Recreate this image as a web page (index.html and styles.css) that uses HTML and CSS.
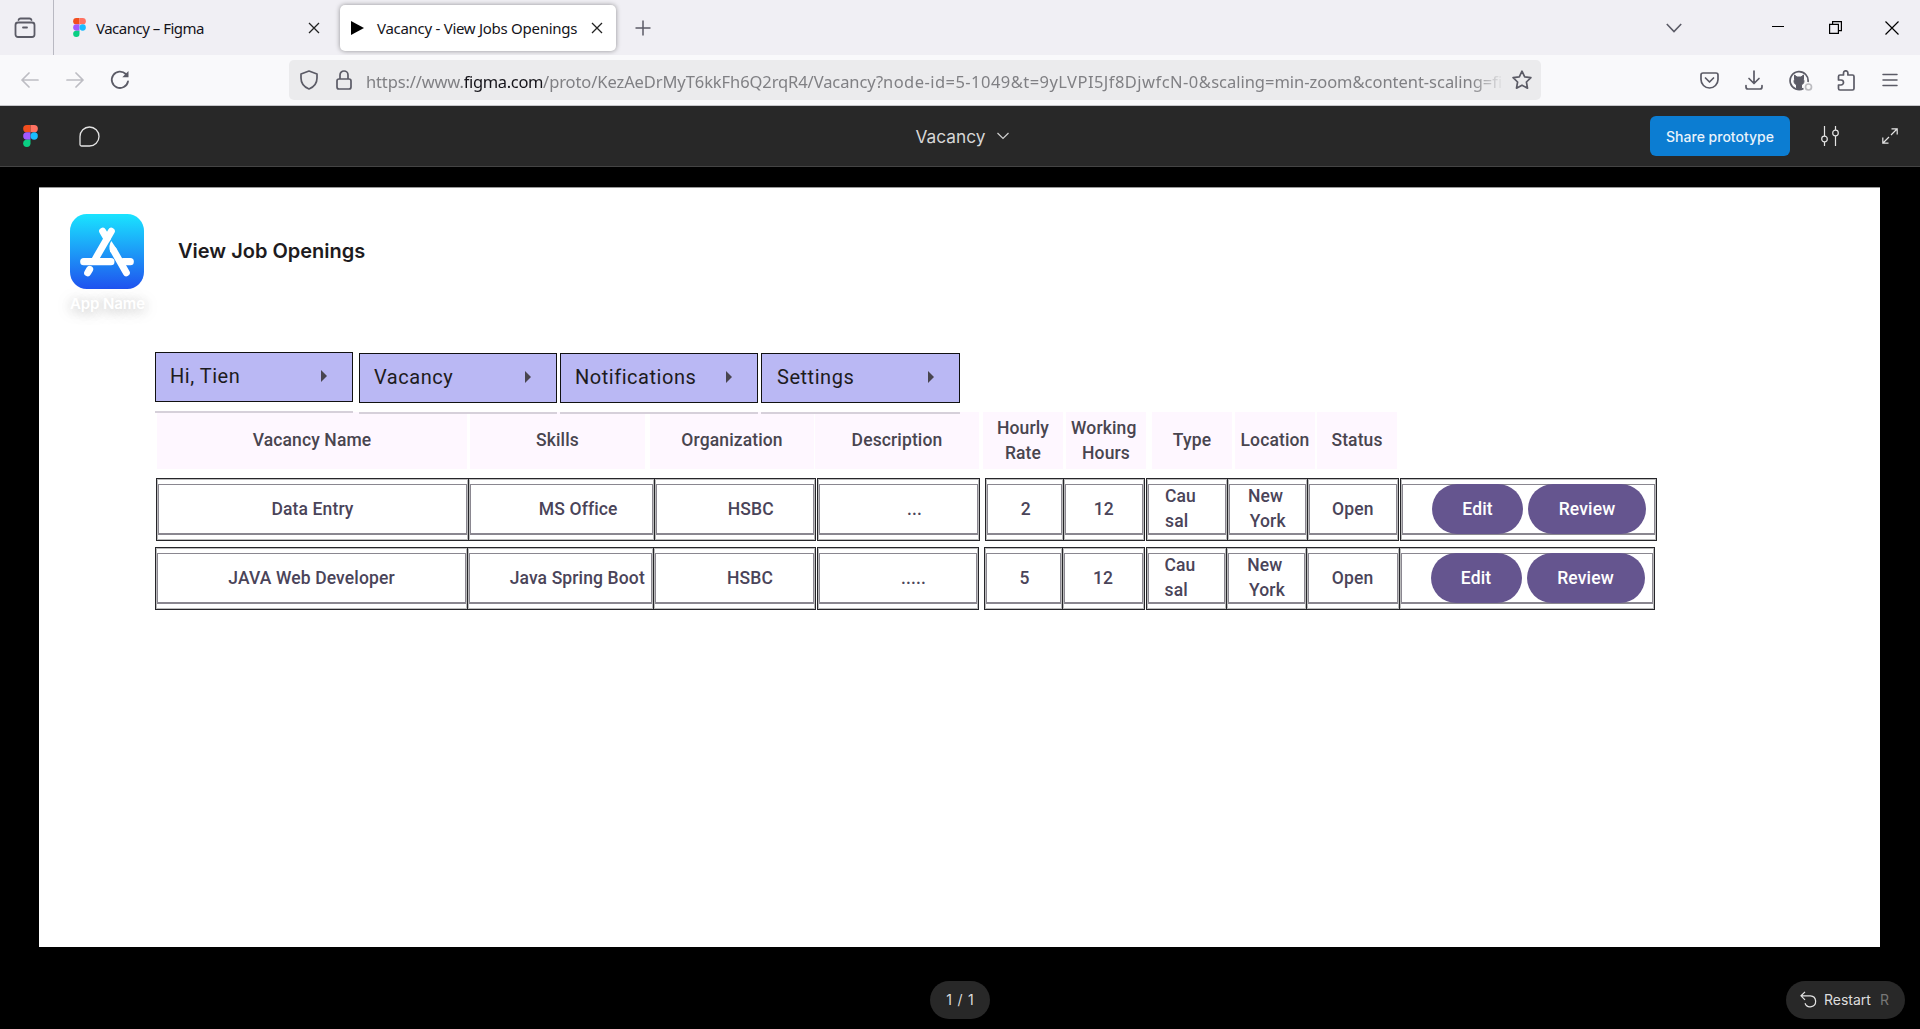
FILE: index.html
```html
<!DOCTYPE html>
<html lang="en">
<head>
<meta charset="utf-8">
<title>Vacancy - View Jobs Openings</title>
<link rel="stylesheet" href="styles.css">
</head>
<body>
<svg width="0" height="0" class="defs" aria-hidden="true">
  <symbol id="figma" viewBox="0 0 16 24">
    <path d="M4 0h4v8H4a4 4 0 0 1 0-8z" fill="#f24e1e"/>
    <path d="M8 0h4a4 4 0 0 1 0 8H8z" fill="#ff7262"/>
    <path d="M4 8h4v8H4a4 4 0 0 1 0-8z" fill="#a259ff"/>
    <circle cx="12" cy="12" r="4" fill="#1abcfe"/>
    <path d="M4 16h4v4a4 4 0 1 1-4-4z" fill="#0acf83"/>
  </symbol>
</svg>

<header class="tabs">
  <div class="tabs-view"><svg width="22" height="22" viewBox="0 0 22 22" fill="none" stroke="#5b5b66" stroke-width="1.800" stroke-linecap="round"><path d="M4.500 3Q5 1.500 6.500 1.500h9q1.500 0 2 1.500"/><rect x="1.500" y="5.500" width="19" height="14.500" rx="2.500"/><path d="M9 10.500h4"/></svg></div>
  <div class="tab">
    <svg class="fav" width="13" height="19"><use href="#figma"/></svg>
    <span class="tab-name name-a">Vacancy – Figma</span>
    <svg class="close" width="12" height="12" viewBox="0 0 12 12" stroke="#222" stroke-width="1.300"><path d="M1 1l10 10M11 1L1 11"/></svg>
  </div>
  <div class="tab active">
    <svg class="fav" width="13" height="14" viewBox="0 0 13 14"><path d="M0 0l13 7-13 7z"/></svg>
    <span class="tab-name name-b">Vacancy - View Jobs Openings</span>
    <svg class="close" width="12" height="12" viewBox="0 0 12 12" stroke="#222" stroke-width="1.300"><path d="M1 1l10 10M11 1L1 11"/></svg>
  </div>
  <svg class="plus" width="16" height="16" viewBox="0 0 16 16" stroke="#5b5b66" stroke-width="1.500"><path d="M8 .5v15M.5 8h15"/></svg>
  <div class="window">
    <svg width="16" height="10" viewBox="0 0 16 10" fill="none" stroke="#5b5b66" stroke-width="1.600"><path d="M.8 1L8 8.500 15.200 1"/></svg>
    <svg width="12" height="12" viewBox="0 0 12 12" stroke="#000"><path d="M0 4.500h12"/></svg>
    <svg width="13" height="13" viewBox="0 0 13 13" fill="none" stroke="#000" stroke-width="1.200"><path d="M.6 3.400h8.800v9H.6zM3.600 3.400V.6h8.800v9H9.400"/></svg>
    <svg width="14" height="14" viewBox="0 0 14 14" stroke="#000" stroke-width="1.200"><path d="M.5.5l13 13M13.500.5l-13 13"/></svg>
  </div>
</header>

<nav class="toolbar">
  <svg width="18" height="16" viewBox="0 0 18 16" fill="none" stroke="#bdbdc3" stroke-width="1.700" stroke-linecap="round" stroke-linejoin="round"><path d="M17 8H1M8 1L1 8l7 7"/></svg>
  <svg width="18" height="16" viewBox="0 0 18 16" fill="none" stroke="#bdbdc3" stroke-width="1.700" stroke-linecap="round" stroke-linejoin="round"><path d="M1 8h16M10 1l7 7-7 7"/></svg>
  <svg width="20" height="20" viewBox="0 0 20 20" fill="none" stroke="#5b5b66" stroke-width="1.800" stroke-linecap="round"><path d="M18 11.500A8.200 8.200 0 1 1 15.800 4"/><path d="M18.500 1v6.200h-6.200z" fill="#5b5b66" stroke="none"/></svg>
  <div class="url">
    <svg width="18" height="20" viewBox="0 0 18 20" fill="none" stroke="#5b5b66" stroke-width="1.700" stroke-linejoin="round"><path d="M9 1l8 3v4c0 5-3 9-8 11C4 17 1 13 1 8V4z"/></svg>
    <svg width="16" height="20" viewBox="0 0 16 20" fill="none" stroke="#5b5b66" stroke-width="1.700"><rect x="1" y="9" width="14" height="10" rx="2"/><path d="M4 9V5a4 4 0 0 1 8 0v4"/></svg>
    <span class="address"><span class="scheme">https://www.</span><b>figma.com</b><span class="path">/proto/KezAeDrMyT6kkFh6Q2rqR4/Vacancy?</span><span class="node">node-id=5-1049&amp;t=9yLVPI5Jf8DjwfcN-0&amp;</span><span class="scaling">scaling=min-zoom&amp;content-scaling=fi</span></span>
    <svg class="star" width="20" height="20" viewBox="0 0 20 20" fill="none" stroke="#5b5b66" stroke-width="1.700" stroke-linejoin="round"><path d="M10 1.200l2.700 5.700 6.200.8-4.500 4.300 1.100 6.200L10 15.200l-5.500 3 1.100-6.200L1.100 7.700l6.200-.8z"/></svg>
  </div>
  <div class="tools">
    <svg width="19" height="17" viewBox="0 0 19 17" fill="none" stroke="#5b5b66" stroke-width="1.700" stroke-linecap="round" stroke-linejoin="round"><path d="M3 1h13q2 0 2 2v4.500a8.500 8.500 0 0 1-17 0V3q0-2 2-2zM5.500 6l4 4 4-4"/></svg>
    <svg width="18" height="20" viewBox="0 0 18 20" fill="none" stroke="#5b5b66" stroke-width="1.700" stroke-linecap="round" stroke-linejoin="round"><path d="M9 1v12M4 8.500L9 13.500l5-5M1 15.500v1.500q0 2 2 2h12q2 0 2-2v-1.500"/></svg>
    <svg class="extension" width="24" height="21" viewBox="0 0 24 21" fill="none" stroke="#5b5b66" stroke-width="1.700"><path d="M14.500 18.500A9 9 0 1 1 19 12"/><path d="M5.500 5l2.500 2h4l2.500-2v4.500c1.500 3-1 5-2 5.500v3.500h-5V15c-1-.5-3.500-2.500-2-5.500z" fill="#5b5b66" stroke-width="1"/><circle cx="19.500" cy="17" r="3" stroke="#bcbcc0" fill="#f9f9fb"/></svg>
    <svg class="puzzle" width="18" height="21" viewBox="0 0 18 21" fill="none" stroke="#5b5b66" stroke-width="1.700" stroke-linejoin="round"><path d="M1.500 9V6.500q0-1.500 1.500-1.500h3.500V3a2.200 2.200 0 0 1 4.400 0v2H15.500q1.500 0 1.500 1.500V18.500q0 1.500-1.500 1.500H3q-1.500 0-1.500-1.500V15H4a2.500 2.500 0 0 0 0-5H1.500z"/></svg>
    <svg width="16" height="14" viewBox="0 0 16 14" stroke="#5b5b66" stroke-width="1.500" stroke-linecap="round"><path d="M1 1.500h14M1 7h14M1 12.500h14"/></svg>
  </div>
</nav>

<section class="proto-bar">
  <div class="marks">
    <svg class="figma-mark" width="15" height="22"><use href="#figma"/></svg>
    <svg class="bubble" width="22" height="21" viewBox="0 0 22 21" fill="none" stroke="#e4e4e4" stroke-width="1.300"><path d="M1 10.500V18.500q0 1.500 1.500 1.500H10.500A9.500 9.500 0 1 0 1 10.500z"/></svg>
  </div>
  <div class="file">Vacancy <svg width="12" height="8" viewBox="0 0 12 8" fill="none" stroke="#d0d0d0" stroke-width="1.200"><path d="M.5 1L6 6.500 11.500 1"/></svg></div>
  <div class="actions">
    <button class="share">Share prototype</button>
    <svg width="20" height="20" viewBox="0 0 20 20" fill="none" stroke="#e4e4e4" stroke-width="1.200"><path d="M4.500 0v10M4.500 16v4M15.500 0v4M15.500 10v10"/><circle cx="4.500" cy="13" r="2.800"/><circle cx="15.500" cy="7" r="2.800"/></svg>
    <svg width="16" height="16" viewBox="0 0 16 16" fill="none" stroke="#e4e4e4" stroke-width="1.200"><path d="M9.500.8h5.700v5.700M15 1L9 7M.8 9.500v5.700h5.700M1 15l6-6"/></svg>
  </div>
</section>

<main class="stage">
  <div class="canvas">
    <div class="brand">
      <div class="app">
        <svg width="74" height="75" viewBox="0 0 222 222" preserveAspectRatio="none">
          <defs><linearGradient id="sky" x1="0" y1="0" x2="0" y2="1"><stop offset="0" stop-color="#1ae4ff"/><stop offset="1" stop-color="#1f52ef"/></linearGradient></defs>
          <rect width="222" height="222" rx="50" fill="url(#sky)"/>
          <g stroke="#fff" stroke-width="21" stroke-linecap="round" fill="none">
            <path d="M124 51L76 133"/><path d="M98 51l13 22"/>
            <path d="M41 141h82"/><path d="M160 141h21"/>
            <path d="M59 164l-6 10"/><path d="M131 108l38 66"/>
          </g>
          <path d="M124 80q-10 14-3 33l20-8z" fill="#fff"/>
        </svg>
        <span class="app-name">App Name</span>
      </div>
      <h1>View Job Openings</h1>
    </div>

    <div class="menu">
      <div class="menu-item first"><div class="menu-box"><span>Hi, Tien</span><i></i></div></div>
      <div class="menu-item second"><div class="menu-box"><span>Vacancy</span><i></i></div></div>
      <div class="menu-item third"><div class="menu-box"><span>Notifications</span><i></i></div></div>
      <div class="menu-item fourth"><div class="menu-box"><span>Settings</span><i></i></div></div>
    </div>

    <div class="head">
      <div>Vacancy Name</div><div>Skills</div><div>Organization</div><div>Description</div><div>Hourly<br>Rate</div><div><span>Working&nbsp;<br>Hours</span></div><div>Type</div><div>Location</div><div>Status</div>
    </div>

    <div class="row row-a">
      <div class="cell"><p>Data Entry</p></div>
      <div class="cell inset"><p>MS Office</p></div>
      <div class="cell inset"><p>HSBC</p></div>
      <div class="cell inset"><p>...</p></div>
      <div class="cell"><p>2</p></div>
      <div class="cell"><p>12</p></div>
      <div class="cell left"><p>Cau<br>sal</p></div>
      <div class="cell"><p>New<br>&nbsp;York</p></div>
      <div class="cell"><p>Open</p></div>
      <div class="cell buttons"><button class="edit">Edit</button><button class="review">Review</button></div>
    </div>
    <div class="row row-b">
      <div class="cell"><p>JAVA Web Developer</p></div>
      <div class="cell inset"><p>Java Spring Boot</p></div>
      <div class="cell inset"><p>HSBC</p></div>
      <div class="cell inset"><p>.....</p></div>
      <div class="cell"><p>5</p></div>
      <div class="cell"><p>12</p></div>
      <div class="cell left"><p>Cau<br>sal</p></div>
      <div class="cell"><p>New<br>&nbsp;York</p></div>
      <div class="cell"><p>Open</p></div>
      <div class="cell buttons"><button class="edit">Edit</button><button class="review">Review</button></div>
    </div>
  </div>
  <footer class="bottom">
    <div class="pager">1 / 1</div>
    <div class="restart"><svg width="18" height="17" viewBox="0 0 18 17" fill="none" stroke="#e4e4e4" stroke-width="1.200"><path d="M5 .8L1 4.800l4 4M1 4.800h9.500a5.500 5.500 0 1 1-5.500 7.500"/></svg><span>Restart</span><kbd>R</kbd></div>
  </footer>
</main>
</body>
</html>
```
FILE: styles.css
```css
* { box-sizing: border-box; }
body { margin: 0; width: 1920px; height: 1029px; overflow: hidden; display: flex; flex-direction: column; background: #000; font-family: Inter, sans-serif; }
svg { display: block; flex: none; }
.defs { position: absolute; }
button { border: 0; font-family: inherit; padding: 0; }

/* browser tabs */
.tabs { height: 55px; background: #f0eff4; display: flex; align-items: center; font-family: "Noto Sans", sans-serif; font-size: 15px; color: #15141a; flex: none; }
.tabs-view { width: 54px; height: 55px; border-right: 1px solid #b9b9c2; padding: 17px 0 0 14px; }
.tab { width: 286px; height: 46px; display: flex; align-items: center; padding: 0 20px 0 19px; white-space: nowrap; }
.tab-name { margin-left: 10px; letter-spacing: -0.5px; }
.name-b { letter-spacing: -0.28px; }
.close { margin-left: auto; }
.tab.active { width: 276px; background: #fff; border-radius: 5px; box-shadow: 0 0 5px rgba(0,0,0,.4); padding: 0 13px 0 11px; }
.active .tab-name { margin-left: 13px; }
.plus { margin-left: 19px; }
.window { margin-left: auto; display: flex; align-items: center; padding-right: 21px; }
.window svg:nth-child(2) { margin-left: 90px; }
.window svg:nth-child(3) { margin-left: 45px; }
.window svg:nth-child(4) { margin-left: 43px; }

/* address bar */
.toolbar { height: 51px; background: #f9f9fb; border-bottom: 1px solid #c6c6ca; display: flex; align-items: center; padding-left: 21px; flex: none; }
.toolbar > svg:nth-child(2) { margin-left: 27px; }
.toolbar > svg:nth-child(3) { margin-left: 26px; }
.url { margin-left: 159px; width: 1252px; height: 40px; background: #ebebed; border-radius: 5px; display: flex; align-items: center; padding: 0 9px 0 11px; }
.url svg + svg { margin-left: 18px; }
.address { margin-left: 14px; padding-top: 2px; width: 1138px; white-space: nowrap; font: 16.500px "Noto Sans", sans-serif; letter-spacing: -0.350px; color: #808084; -webkit-mask-image: linear-gradient(to right, #000 1105px, transparent 1138px); mask-image: linear-gradient(to right, #000 1105px, transparent 1138px); }
.address b { font-weight: 400; color: #15141a; }
.scheme { letter-spacing: -0.150px; }
.path { letter-spacing: -0.090px; }
.node { letter-spacing: 0.460px; }
.scaling { letter-spacing: -0.030px; }
.star { margin-left: auto; }
.tools { margin-left: auto; display: flex; align-items: center; gap: 26px; padding-right: 22px; }
.extension { margin: 0 -2px 0 0; }
.puzzle { margin-right: 1px; }

/* prototype header */
.proto-bar { height: 61px; background: #282828; border-bottom: 1px solid #444; display: grid; grid-template-columns: 1fr auto 1fr; align-items: center; padding: 0 22px 0 23px; flex: none; }
.marks { display: flex; align-items: center; gap: 41px; }
.file { color: #d6d6d6; font-size: 17.300px; display: flex; align-items: center; gap: 12px; padding-left: 4px; }
.actions { display: flex; align-items: center; justify-content: flex-end; }
.share { width: 140px; height: 40px; border-radius: 6px; background: #0c7dd2; color: #e8f2fb; font-size: 14px; font-weight: 500; }
.actions svg:nth-child(2) { margin-left: 30px; }
.actions svg:nth-child(3) { margin-left: 42px; }

/* prototype canvas */
.stage { flex: 1; display: flex; flex-direction: column; padding: 20px 40px 0 39px; }
.canvas { height: 760px; background: #fff; border-top: 1px solid #999; padding-left: 31px; font-family: Roboto, sans-serif; display: flex; flex-direction: column; align-items: flex-start; flex: none; }
.brand { display: flex; height: 164px; padding-top: 26px; }
.app { width: 74px; }
.app-name { display: block; width: 74px; margin-top: 5px; text-align: center; color: #fff; font: 600 15px/20px Inter, sans-serif; letter-spacing: -.1px; white-space: nowrap; text-shadow: 0 2px 12px rgba(0,0,0,.18), 0 2px 18px rgba(0,0,0,.22); }
h1 { margin: 24px 0 0 34px; font: 600 20px/26px Inter, sans-serif; color: #1d1b20; }

.menu { display: flex; margin-left: 85px; height: 63px; position: relative; }
.menu-item { width: 198px; height: 61px; border-bottom: 2px solid #d6d0da; }
.menu-item + .menu-item { margin-top: 1px; }
.second { margin-left: 6px; }
.third { margin-left: 3px; }
.fourth { margin-left: 3px; width: 199px; }
.menu-box { height: 50px; background: #bab8f4; border: 1px solid #111; display: flex; align-items: center; justify-content: space-between; padding: 0 25px 2px 14px; font-size: 20px; letter-spacing: .530px; color: #1d1b20; }
.fourth .menu-box { padding-left: 15px; }
.menu-box i { width: 0; border-left: 6px solid #49454f; border-top: 6px solid transparent; border-bottom: 6px solid transparent; }

.head, .row { display: grid; font-size: 17.500px; line-height: 25px; font-weight: 500; letter-spacing: .125px; white-space: nowrap; text-align: center; }
.head { margin: -3px 0 0 87px; grid-template-rows: 57px; grid-template-columns: 313px 180px 165px 168px 83px 86px 83px 82px 80px; color: #49454f; }
.head div { background: #fef7ff; display: flex; align-items: center; justify-content: center; margin-right: 3px; }
.head div:nth-child(2) { margin-right: 5px; }
.head div:nth-child(3) { margin-right: 1px; }
.head div:nth-child(4) { margin-right: 4px; }
.head div:nth-child(6) { margin-right: 6px; }
.head div:nth-child(8) { margin-right: 2px; }
.head div:nth-child(9) { margin-right: 0; }

.row { grid-template-rows: 63px; color: #4a4459; }
.row-a { margin: 9px 0 0 86px; grid-template-columns: 312px 185.500px 163.500px 168px 77.500px 83.500px 80.500px 80px 93.500px 257px; }
.row-b { margin: 6px 0 0 85px; grid-template-columns: 312px 185.500px 164px 167px 78px 84px 80.500px 79.500px 93px 256px; }
.cell { position: relative; border: 1px solid #26262a; box-shadow: inset 0 0 0 1px rgba(30,30,34,.3); padding: 5px 1px; margin-right: -1px; display: flex; }
.cell p { flex: 1; margin: 0; border: 1px solid #8a8790; border-bottom-width: 2px; display: flex; align-items: center; justify-content: center; }
.inset p { padding-left: 32px; }
.cell:nth-child(2) p { padding-left: 34px; }
.cell:nth-child(5) p { padding-left: 3px; }
.left p { justify-content: flex-start; text-align: left; padding-left: 16px; }
.cell:nth-child(8) p { padding-right: 3px; }
.cell:nth-child(3), .cell:nth-child(6) { margin-right: 1px; }
.cell:nth-child(4) { margin-right: 5px; }
.row-a .cell:nth-child(9) { margin-right: 1px; }
.cell:nth-child(10) { margin-right: 0; }
.buttons::before { content: ""; position: absolute; inset: 5px 1px; border: 1px solid #8a8790; border-bottom-width: 2px; }
.buttons button { position: relative; background: #65558f; color: #fff; font: 500 17.500px/25px Roboto, sans-serif; letter-spacing: .125px; height: 50px; border-radius: 25px; }
.edit { width: 91px; margin-left: 30px; }
.review { width: 118px; margin-left: 5px; }

.bottom { flex: 1; display: grid; grid-template-columns: 1fr auto 1fr; align-items: center; margin: 0 -25px 0 -24px; padding-top: 24px; height: 82px; }
.pager { grid-column: 2; width: 60px; height: 38px; line-height: 37px; border-radius: 19px; background: #282828; color: #ddd; text-align: center; font-size: 14px; word-spacing: 1.500px; }
.restart { justify-self: end; width: 119px; height: 38px; border-radius: 19px; background: #282828; color: #ddd; display: flex; align-items: center; padding: 0 0 1px 14px; font-size: 14px; }
.restart span { margin-left: 6px; }
kbd { font-family: inherit; color: #777; margin-left: 9px; }
```
